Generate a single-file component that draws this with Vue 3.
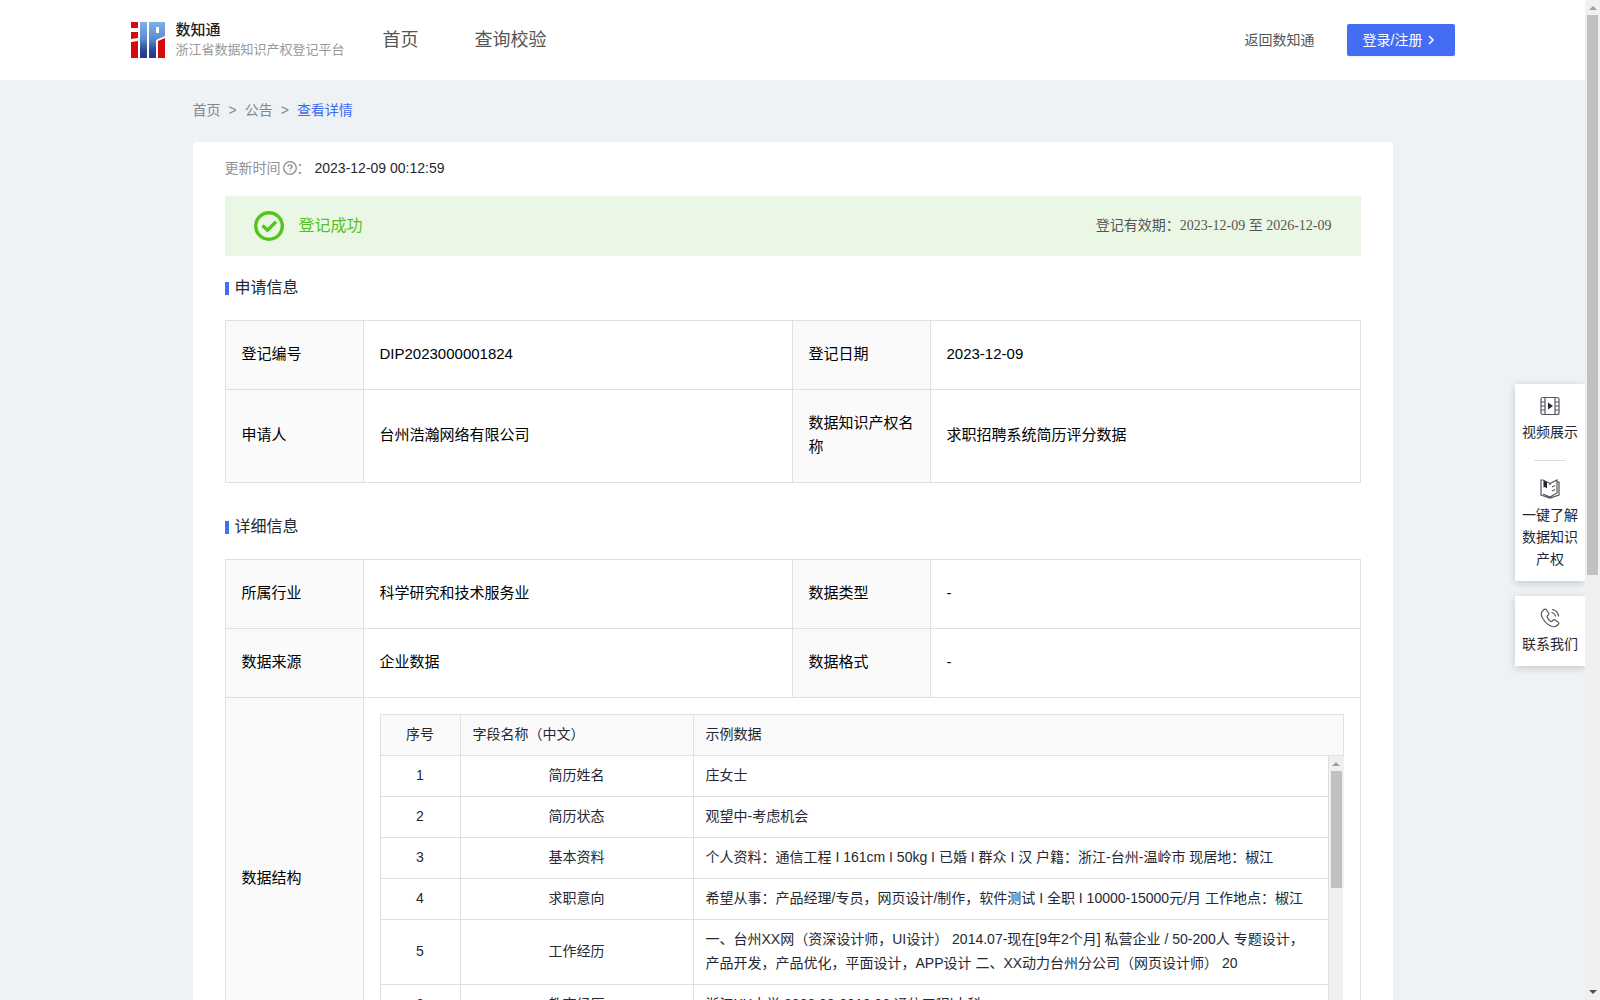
<script setup>
const applyRows = [
  [['登记编号', 'DIP2023000001824'], ['登记日期', '2023-12-09']],
  [['申请人', '台州浩瀚网络有限公司'], ['数据知识产权名称', '求职招聘系统简历评分数据']]
]
const detailRows = [
  [['所属行业', '科学研究和技术服务业'], ['数据类型', '-']],
  [['数据来源', '企业数据'], ['数据格式', '-']]
]
const fields = [
  ['简历姓名', '庄女士'],
  ['简历状态', '观望中-考虑机会'],
  ['基本资料', '个人资料：通信工程 I 161cm I 50kg I 已婚 I 群众 I 汉 户籍：浙江-台州-温岭市 现居地：椒江'],
  ['求职意向', '希望从事：产品经理/专员，网页设计/制作，软件测试 I 全职 I 10000-15000元/月 工作地点：椒江'],
  ['工作经历', '一、台州XX网（资深设计师，UI设计） 2014.07-现在[9年2个月] 私营企业 / 50-200人 专题设计，产品开发，产品优化，平面设计，APP设计 二、XX动力台州分公司（网页设计师） 20'],
  ['教育经历', '浙江XX大学 2008.09-2012.06 通信工程|本科']
]
</script>

<template>
  <div class="window">
    <div class="page">
      <header class="header">
        <div class="header-inner">
          <a class="brand" href="#">
            <svg class="logo" viewBox="0 0 34 36" aria-hidden="true">
              <defs>
                <linearGradient id="logo-blue" x1="0" y1="0" x2="0" y2="1">
                  <stop offset="0" stop-color="#7fb0e6" />
                  <stop offset="0.45" stop-color="#5b8fd0" />
                  <stop offset="0.8" stop-color="#2a4795" />
                  <stop offset="1" stop-color="#223a86" />
                </linearGradient>
              </defs>
              <path fill="#d40a0e" d="M0 0h7v6H0zM0 10h7v6l-7 1zM0 20l7-1v17H0zM27 19l7-3v20h-7z" />
              <path fill="url(#logo-blue)" fill-rule="evenodd" d="M9 0h7v36H9zM18 0h16v14l-9 4v18h-7zM25 5v6h3V5z" />
            </svg>
            <span class="brand-text">
              <span class="brand-name">数知通</span>
              <span class="brand-sub">浙江省数据知识产权登记平台</span>
            </span>
          </a>
          <nav class="nav">
            <a href="#">首页</a>
            <a href="#">查询校验</a>
          </nav>
          <a class="back" href="#">返回数知通</a>
          <button class="login" type="button">
            登录/注册
            <svg viewBox="0 0 10 10" aria-hidden="true"><path d="M3 1l4 4-4 4" /></svg>
          </button>
        </div>
      </header>

      <main class="container">
        <nav class="crumbs">
          <a href="#">首页</a><span>&gt;</span><a href="#">公告</a><span>&gt;</span><a class="current" href="#">查看详情</a>
        </nav>

        <section class="card">
          <p class="updated">
            <span class="muted">更新时间</span>
            <svg viewBox="0 0 14 14" aria-hidden="true">
              <circle cx="7" cy="7" r="6.300" />
              <path d="M5 5.800c0-2.700 4-2.700 4 0 0 1.300-2 1.300-2 2.500M7 9.400v1.200" />
            </svg>
            <span class="muted">：</span>
            <time>2023-12-09 00:12:59</time>
          </p>

          <div class="banner">
            <svg viewBox="0 0 30 30" aria-hidden="true">
              <circle cx="15" cy="15" r="13.300" />
              <path d="M8.500 14.500l5 4.700 8.500-8.500" />
            </svg>
            <strong>登记成功</strong>
            <span class="validity">登记有效期：2023-12-09 至 2026-12-09</span>
          </div>

          <h2 class="title">申请信息</h2>
          <table class="info">
            <colgroup><col class="label-col"><col class="value-col"><col class="label-col"><col></colgroup>
            <tbody>
              <tr v-for="row in applyRows" :key="row[0][0]">
                <template v-for="cell in row" :key="cell[0]">
                  <th scope="row">{{ cell[0] }}</th>
                  <td>{{ cell[1] }}</td>
                </template>
              </tr>
            </tbody>
          </table>

          <h2 class="title">详细信息</h2>
          <table class="info">
            <colgroup><col class="label-col"><col class="value-col"><col class="label-col"><col></colgroup>
            <tbody>
              <tr v-for="row in detailRows" :key="row[0][0]">
                <template v-for="cell in row" :key="cell[0]">
                  <th scope="row">{{ cell[0] }}</th>
                  <td>{{ cell[1] }}</td>
                </template>
              </tr>
              <tr>
                <th scope="row">数据结构</th>
                <td class="structure" colspan="3">
                  <div class="list">
                    <table class="fields">
                      <colgroup><col class="no-col"><col class="name-col"><col><col class="bar-col"></colgroup>
                      <thead>
                        <tr>
                          <th scope="col" class="center">序号</th>
                          <th scope="col">字段名称（中文）</th>
                          <th scope="col" colspan="2">示例数据</th>
                        </tr>
                      </thead>
                      <tbody>
                        <tr v-for="(field, i) in fields" :key="field[0]">
                          <td class="center">{{ i + 1 }}</td>
                          <td class="center">{{ field[0] }}</td>
                          <td>{{ field[1] }}</td>
                          <td v-if="i === 0" class="bar-cell" :rowspan="fields.length">
                            <div class="bar"><i class="up"></i><i class="thumb"></i></div>
                          </td>
                        </tr>
                      </tbody>
                    </table>
                  </div>
                </td>
              </tr>
            </tbody>
          </table>
        </section>
      </main>
    </div>

    <div class="bar page-bar"><i class="up"></i><i class="thumb"></i><i class="down"></i></div>

    <aside class="dock">
      <div class="dock-box">
        <a href="#">
          <svg viewBox="0 0 20 20" aria-hidden="true">
            <rect x="1" y="1.500" width="18" height="17" rx="2" />
            <path d="M5 1.500v17M15 1.500v17M1 6h4M1 10h4M1 14h4M15 6h4M15 10h4M15 14h4" />
            <path class="solid" d="M8 6.500l5 3.500-5 3.500z" />
          </svg>
          <span>视频展示</span>
        </a>
        <hr>
        <a href="#">
          <svg viewBox="0 0 20 20" aria-hidden="true">
            <path d="M3 1H1v15l9 3 9-3V3h-2M3 1l6 3q1 .500 1 2 0-1.500 1-2l6-3v13l-7 4-7-3M12 8l3-1.500M12 12l3-1.500" />
            <path class="solid" d="M3.500 1.500L7 3v6.500L5 8 3.500 8.500z" />
          </svg>
          <span>一键了解数据知识产权</span>
        </a>
      </div>
      <div class="dock-box">
        <a href="#">
          <svg viewBox="0 0 20 20" aria-hidden="true">
            <path d="M2 3.500L4 1.500q1.500-1 2.500.500L8.500 5q.700 1.200-.500 2.200-1.500 1-.500 2.500 1 2 3 3.500 1.300.800 2.200-.500 1-1.500 2.300-.700l3 2q1.500 1 .200 2.500-2.500 3-6 2Q7 17 3.500 11.500 0 7 2 3.500z" />
            <path d="M11.500 4.500q3.500.500 4 4M12 1.500q6 .800 6.500 7" />
          </svg>
          <span>联系我们</span>
        </a>
      </div>
    </aside>
  </div>
</template>

<style>
body {
  margin: 0;
  overflow: hidden;
}
</style>

<style scoped>
* {
  box-sizing: border-box;
}
a {
  color: inherit;
  text-decoration: none;
}
.window {
  position: relative;
  display: flex;
  height: 100vh;
  overflow: hidden;
  background: #eef2f5;
  color: #252833;
  font: 14px/24px "Liberation Sans", "Noto Sans CJK SC", sans-serif;
}
.page {
  flex: 1;
  min-width: 0;
}

.header {
  background: #fff;
}
.header-inner {
  display: flex;
  align-items: center;
  height: 80px;
  max-width: 1324px;
  margin: 0 auto;
  color: #555;
}
.brand {
  display: flex;
  align-items: center;
  gap: 11px;
}
.logo {
  width: 34px;
  height: 36px;
}
.brand-text {
  display: flex;
  flex-direction: column;
  line-height: 20px;
}
.brand-name {
  color: #222;
  font-size: 15px;
  font-weight: 500;
}
.brand-sub {
  color: #999;
  font-size: 13px;
}
.nav {
  display: flex;
  flex: 1;
  gap: 56px;
  margin-left: 38px;
  font-size: 18px;
}
.login {
  display: flex;
  align-items: center;
  gap: 4px;
  height: 32px;
  width: 108px;
  margin-left: 32px;
  padding: 0 16px;
  border: 0;
  border-radius: 2px;
  background: #446df6;
  box-shadow: 0 2px 0 rgba(0, 0, 0, 0.04);
  color: #fff;
  font: inherit;
  white-space: nowrap;
}
.login svg {
  flex: none;
  width: 10px;
  height: 10px;
  fill: none;
  stroke: currentColor;
  stroke-width: 1.5;
}

.container {
  max-width: 1200px;
  margin: 0 auto;
}
.crumbs {
  display: flex;
  gap: 8px;
  padding: 18px 0 20px;
  color: #85878c;
}
.crumbs .current {
  color: #3f6bf2;
}
.card {
  padding: 14px 32px 32px;
  border-radius: 4px;
  background: #fff;
}
.updated {
  display: flex;
  align-items: center;
  margin: 0 0 16px;
}
.updated .muted {
  color: #909196;
}
.updated svg {
  width: 14px;
  height: 14px;
  margin-left: 2px;
  fill: none;
  stroke: #8c8c8c;
  stroke-width: 1.3;
}
.updated time {
  margin-left: 4px;
}
.banner {
  display: flex;
  align-items: center;
  height: 60px;
  padding: 0 29px;
  background: #ebf7e5;
}
.banner svg {
  width: 30px;
  height: 30px;
  fill: none;
  stroke: #52c41a;
  stroke-width: 3.4;
}
.banner strong {
  margin-left: 15px;
  color: #52c41a;
  font-size: 16px;
  font-weight: 400;
}
.validity {
  margin-left: auto;
  color: #555;
  font-family: "Liberation Serif", "Noto Sans CJK SC", serif;
}

.title {
  display: flex;
  align-items: center;
  gap: 6px;
  margin: 20px 0;
  font-size: 16px;
  font-weight: 400;
}
.title::before {
  content: "";
  width: 4px;
  height: 13px;
  background: #446df6;
}
.info + .title {
  margin-top: 32px;
}
.info,
.fields {
  width: 100%;
  border-collapse: collapse;
  table-layout: fixed;
}
.info th,
.info td {
  border: 1px solid #e0e0e0;
  font-weight: 400;
  text-align: left;
}
.info > tbody > tr > th,
.info > tbody > tr > td {
  padding: 21px 16px 23px;
  color: #000;
  font-size: 15px;
}
.info > tbody > tr > th,
.fields th {
  background: #fafafa;
}
.label-col {
  width: 138px;
}
.value-col {
  width: 429px;
}
.info > tbody > tr > td.structure {
  padding: 16px;
}
.list {
  height: 329px;
  overflow: hidden;
  color: #252833;
  font-size: 14px;
}
.info .fields th,
.info .fields td {
  padding: 7px 12px 9px;
  color: #252833;
  font-size: 14px;
}
.info .fields .center {
  text-align: center;
}
.no-col {
  width: 80px;
}
.name-col {
  width: 233px;
}
.bar-col {
  width: 15px;
}
.info .fields .bar-cell {
  padding: 0;
  border-right: 0;
  background: #f0f0f0;
  vertical-align: top;
}

.bar {
  display: flex;
  flex-direction: column;
  align-items: center;
  width: 15px;
  background: #f0f0f0;
}
.up {
  margin: 6px 0 5px;
  border: 4px solid transparent;
  border-top: 0;
  border-bottom-color: #a0a0a0;
}
.thumb {
  width: 11px;
  height: 117px;
  background: #c1c1c1;
}
.page-bar .thumb {
  height: 560px;
}
.down {
  margin: auto 0 6px;
  border: 4px solid transparent;
  border-bottom: 0;
  border-top-color: #505050;
}

.dock {
  position: absolute;
  top: 384px;
  right: 15px;
  display: flex;
  flex-direction: column;
  gap: 15px;
  width: 70px;
  line-height: 22px;
  text-align: center;
}
.dock-box {
  padding: 12px 7px 11px;
  background: #fff;
  box-shadow: 0 2px 8px rgba(0, 0, 0, 0.18);
  clip-path: inset(-12px 0 -12px -12px);
}
.dock a {
  display: flex;
  flex-direction: column;
  align-items: center;
  gap: 5px;
}
.dock svg {
  width: 20px;
  height: 20px;
  fill: none;
  stroke: #55575f;
  stroke-width: 1.2;
}
.dock .solid {
  fill: #252833;
  stroke: none;
}
.dock hr {
  width: 32px;
  margin: 17px auto 18px;
  border: 0;
  border-top: 1px solid #dcdcdc;
}
</style>
